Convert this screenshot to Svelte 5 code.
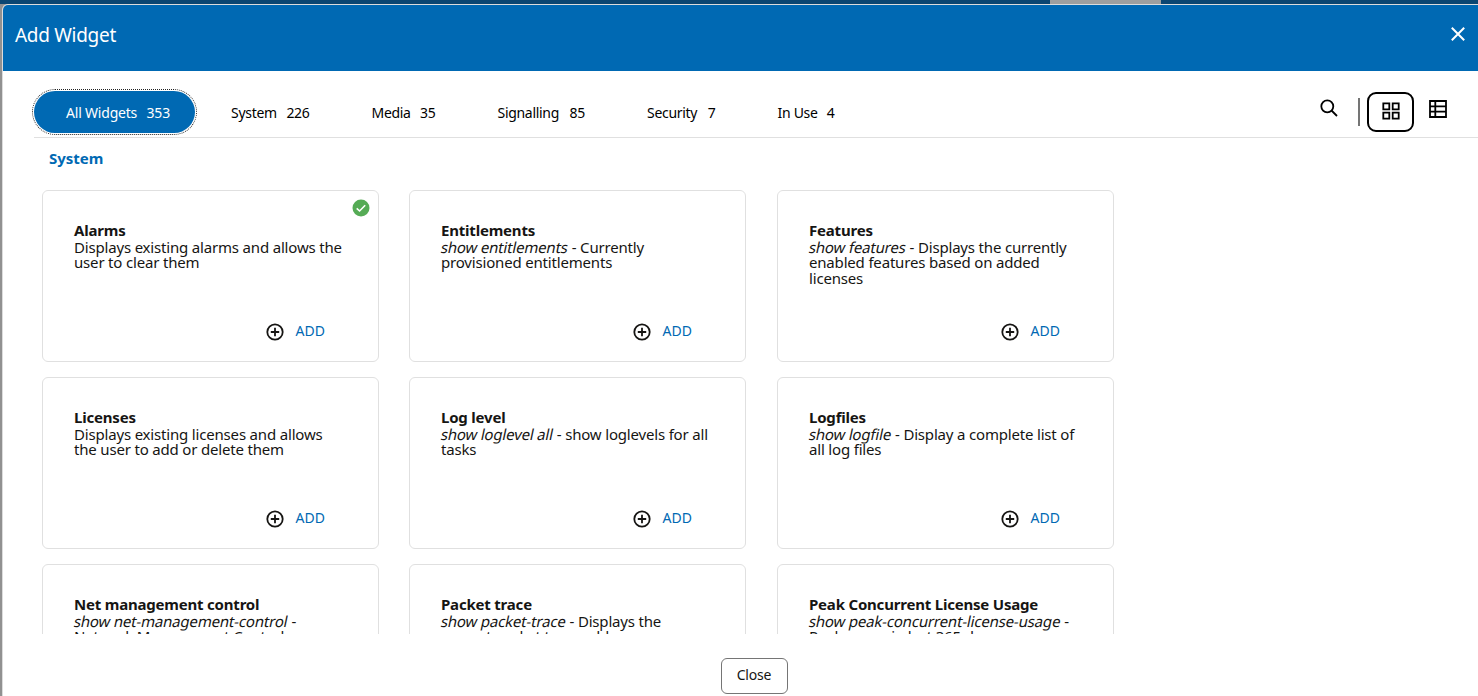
<script>
    let active = $state("All Widgets");
    let view = $state("grid");

    const tabs = [
        { name: "All Widgets", count: 353 },
        { name: "System", count: 226 },
        { name: "Media", count: 35 },
        { name: "Signalling", count: 85 },
        { name: "Security", count: 7 },
        { name: "In Use", count: 4 },
    ];

    const widgets = [
        { title: "Alarms", text: "Displays existing alarms and allows the user to clear them", used: true },
        { title: "Entitlements", command: "show entitlements", text: "Currently provisioned entitlements" },
        { title: "Features", command: "show features", text: "Displays the currently enabled features based on added licenses" },
        { title: "Licenses", text: "Displays existing licenses and allows the user to add or delete them" },
        { title: "Log level", command: "show loglevel all", text: "show loglevels for all tasks" },
        { title: "Logfiles", command: "show logfile", text: "Display a complete list of all log files" },
        { title: "Net management control", command: "show net-management-control", text: "Network Management Controls" },
        { title: "Packet trace", command: "show packet-trace", text: "Displays the current packet trace addresses" },
        { title: "Peak Concurrent License Usage", command: "show peak-concurrent-license-usage", text: "Peak usage in last 365 days" },
    ];
</script>

<div class="page">
    <div class="topbar"><div class="toptab"></div></div>

    <div class="dialog">
        <header>
            <h1>Add Widget</h1>
            <button class="x" aria-label="Close dialog">
                <svg width="16" height="16" viewBox="0 0 16 16">
                    <path d="M1.8 1.8L14.2 14.2M14.2 1.8L1.8 14.2" stroke="#fff" stroke-width="2" />
                </svg>
            </button>
        </header>

        <div class="toolbar">
            <nav>
                {#each tabs as tab}
                    <button class="tab" class:active={active == tab.name} onclick={() => (active = tab.name)}>
                        <span>{tab.name}</span>
                        <span>{tab.count}</span>
                    </button>
                {/each}
            </nav>
            <div class="tools">
                <button class="search" aria-label="Search">
                    <svg width="18" height="18" viewBox="0 0 18 18" fill="none" stroke="#000" stroke-width="1.8">
                        <circle cx="7.3" cy="7.3" r="6" />
                        <path d="M11.5 11.5L17 17" />
                    </svg>
                </button>
                <span class="divider"></span>
                <button class="view" class:selected={view == "grid"} aria-label="Grid view" onclick={() => (view = "grid")}>
                    <svg width="18" height="18" viewBox="0 0 18 18" fill="none" stroke="#000" stroke-width="1.8">
                        <path d="M1.3 1.3h6v6h-6zM10.7 1.3h6v6h-6zM1.3 10.7h6v6h-6zM10.7 10.7h6v6h-6z" />
                    </svg>
                </button>
                <button class="view" class:selected={view == "list"} aria-label="List view" onclick={() => (view = "list")}>
                    <svg width="18" height="18" viewBox="0 0 18 18" fill="none" stroke="#000" stroke-width="1.8">
                        <path d="M1 1h16v16H1zM6.3 1v16M1 6.3h16M1 11.7h16" />
                    </svg>
                </button>
            </div>
        </div>

        <main>
            <h2>System</h2>
            <div class="cards">
                {#each widgets as widget}
                    <div class="card">
                        <h3>{widget.title}</h3>
                        <p>
                            {#if widget.command}<i>{widget.command}</i>{" - "}{/if}{widget.text}
                        </p>
                        <button class="add">
                            <svg width="18" height="18" viewBox="0 0 18 18" fill="none" stroke="#161513" stroke-width="1.8">
                                <circle cx="9" cy="9" r="7.7" />
                                <path d="M9 4.8v8.4M4.8 9h8.4" />
                            </svg>
                            <span>ADD</span>
                        </button>
                        {#if widget.used}
                            <svg class="check" width="18" height="18" viewBox="0 0 18 18">
                                <circle cx="9" cy="9" r="8.5" fill="#55ab55" />
                                <path d="M4.7 9.3L7.6 12L13.2 6.2" fill="none" stroke="#fff" stroke-width="1.6" />
                            </svg>
                        {/if}
                    </div>
                {/each}
            </div>
        </main>

        <footer>
            <button class="close">Close</button>
        </footer>
    </div>
</div>

<style>
    :global(body) {
        overflow: hidden;
    }
    .page {
        height: 696px;
        box-sizing: border-box;
        padding-left: 2px;
        display: flex;
        flex-direction: column;
        background: #919191;
        font-family: "Noto Sans", "Open Sans", sans-serif;
        color: #161513;
    }
    button {
        font: inherit;
        color: inherit;
        background: none;
        border: none;
        padding: 0;
        display: flex;
        align-items: center;
    }
    svg {
        display: block;
    }
    h1,
    h2,
    h3,
    p {
        margin: 0;
    }
    .topbar {
        height: 4px;
        margin-left: -2px;
        background: #0b4672;
    }
    .toptab {
        width: 111px;
        height: 4px;
        margin-left: 1050px;
        background: #9f9f9f;
    }
    .dialog {
        flex: 1;
        min-height: 0;
        display: flex;
        flex-direction: column;
        background: #fff;
        border: 1px solid #dcdcdc;
        border-width: 1px 0 0 1px;
        border-radius: 6px 0 0 0;
        overflow: hidden;
    }
    header {
        height: 66px;
        box-sizing: border-box;
        padding: 16px 12px 0 12px;
        display: flex;
        justify-content: space-between;
        align-items: flex-start;
        background: #0069b3;
    }
    h1 {
        font-size: 19px;
        font-weight: 400;
        line-height: 28px;
        letter-spacing: -0.3px;
        color: #fff;
    }
    .x {
        height: 26px;
    }
    .toolbar {
        height: 66px;
        margin-left: 31px;
        display: flex;
        justify-content: space-between;
        border-bottom: 1px solid #e0e0e0;
    }
    nav {
        display: grid;
        grid-template-columns: 165px 140.5px 126px 149.5px 130.5px 119px;
        padding-top: 20px;
    }
    .tab {
        height: 42px;
        margin-right: 4px;
        padding: 0 26px 0 32px;
        justify-content: space-between;
        font-size: 14px;
        letter-spacing: -0.3px;
        white-space: nowrap;
        color: #000;
    }
    .tab.active {
        padding-right: 25px;
        letter-spacing: -0.2px;
        background: #0069b3;
        color: #fff;
        border-radius: 21px;
        outline: 1px dotted #222;
        outline-offset: 1px;
    }
    .tools {
        display: flex;
        align-items: flex-start;
        padding: 21px 16.5px 0 0;
    }
    .search {
        margin: 7px 20px 0 0;
    }
    .divider {
        width: 2px;
        height: 28px;
        margin: 6px 7px 0 0;
        background: #757575;
    }
    .view {
        width: 47.5px;
        height: 34px;
        justify-content: center;
    }
    .view.selected {
        box-sizing: border-box;
        width: 47px;
        height: 40px;
        padding: 0 0 2px 0;
        border: 2px solid #000;
        border-radius: 9px;
    }
    main {
        height: 496px;
        overflow: hidden;
        padding: 0 39px;
    }
    h2 {
        box-sizing: border-box;
        height: 52px;
        padding: 8px 0 0 7px;
        font-size: 15px;
        line-height: 24px;
        color: #0069b3;
    }
    .cards {
        display: grid;
        grid-template-columns: 367px 368px 337px;
        row-gap: 15px;
    }
    .card {
        position: relative;
        width: 337px;
        height: 172px;
        box-sizing: border-box;
        padding: 30px 31px 0;
        border: 1px solid #e0e0e0;
        border-radius: 6px;
    }
    h3 {
        font-size: 15px;
        line-height: 18px;
        letter-spacing: -0.2px;
    }
    p {
        height: 82px;
        padding-top: 0.6px;
        font-size: 15px;
        line-height: 15.6px;
        letter-spacing: -0.18px;
    }
    /* slanted upright face, wider than the real italic */
    i {
        display: inline-block;
        font-style: normal;
        transform: skewX(-12deg);
    }
    .add {
        margin: -0.6px 0 0 192px;
        gap: 11.5px;
        font-size: 14px;
        line-height: 20px;
        color: #0069b3;
    }
    .add svg {
        margin-top: 2px;
    }
    .check {
        position: absolute;
        top: 8px;
        right: 8px;
    }
    footer {
        flex: 1;
        display: flex;
        justify-content: center;
        align-items: flex-start;
        padding: 24px 0 0 27px;
    }
    .close {
        box-sizing: border-box;
        width: 67px;
        height: 36px;
        justify-content: center;
        padding-bottom: 3px;
        border: 1px solid #757575;
        border-radius: 6px;
        font-size: 14px;
        letter-spacing: -0.2px;
    }
</style>
